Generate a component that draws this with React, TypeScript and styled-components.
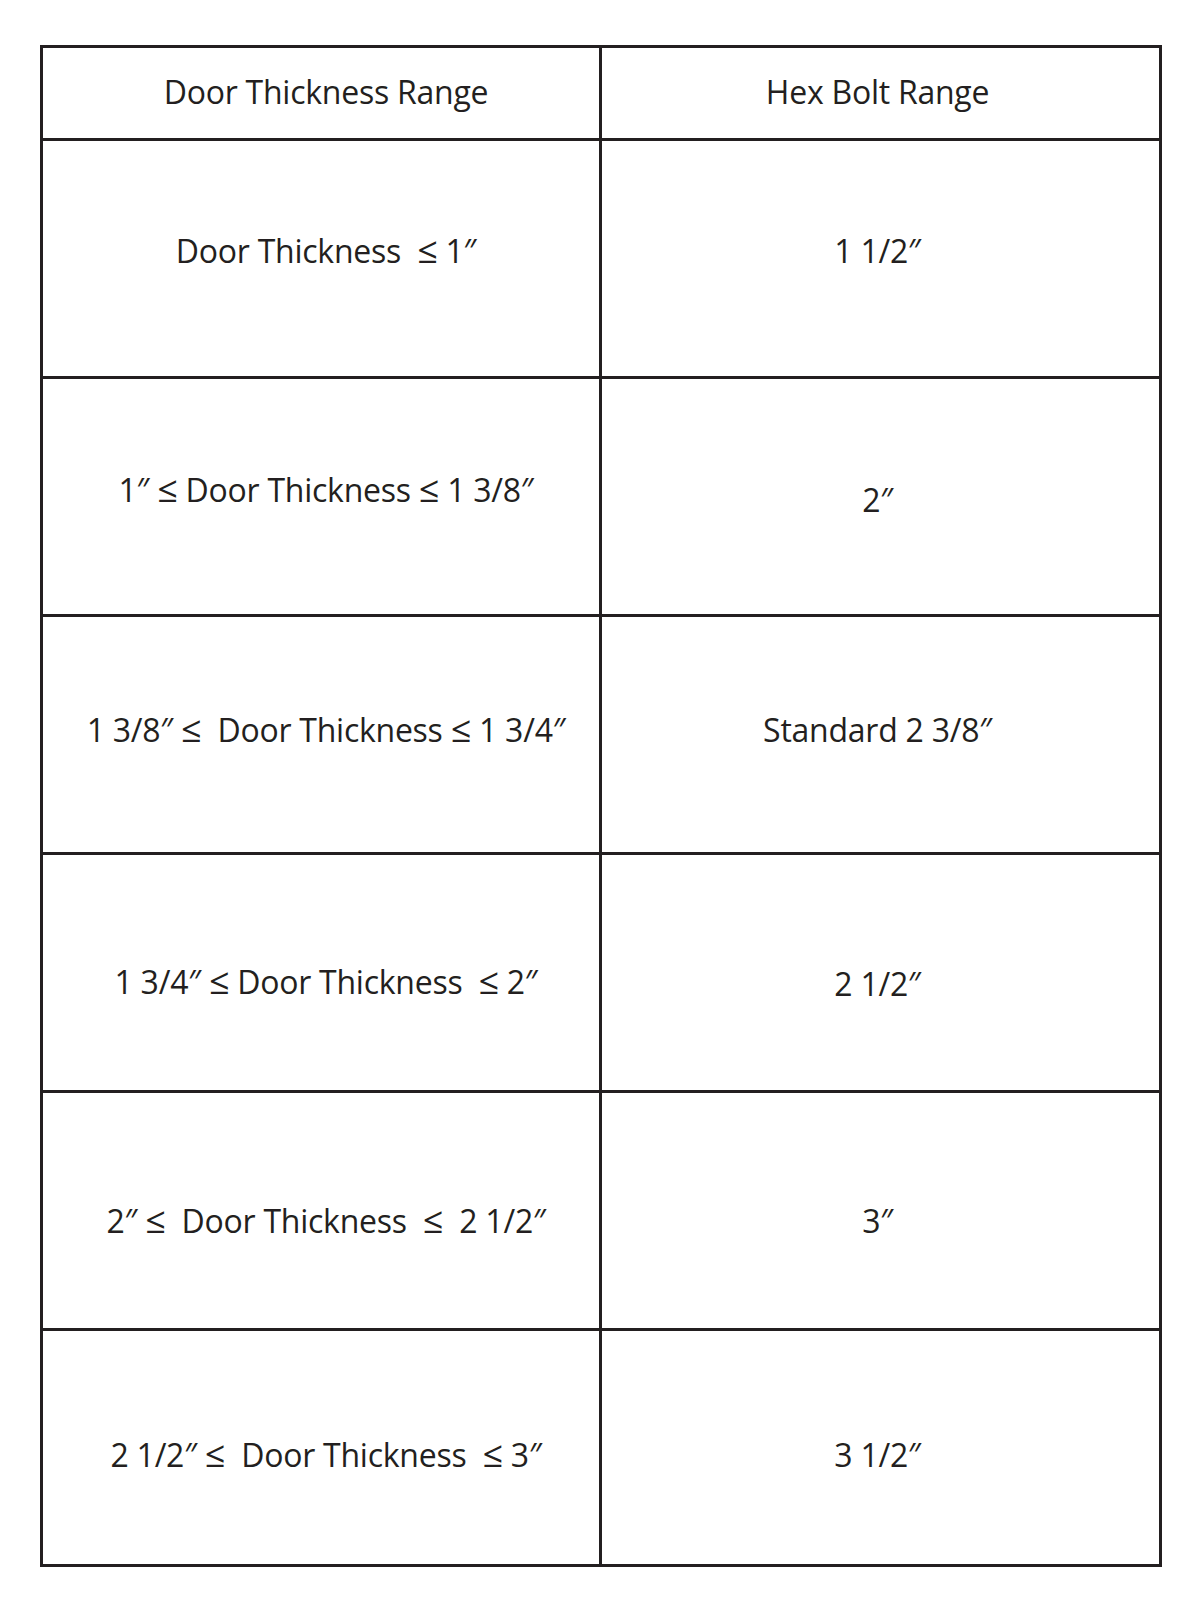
import React from "react";
import styled, { createGlobalStyle } from "styled-components";

const Global = createGlobalStyle`
  html, body { margin: 0; padding: 0; background: #ffffff; }
  body { width: 1200px; height: 1613px; overflow: hidden; }
`;

const Page = styled.div`
  padding: 45px 0 0 40px;
`;

const Grid = styled.div`
  box-sizing: border-box;
  width: 1122px;
  border: 3px solid #231f20;
  display: grid;
  grid-template-columns: 559px 1fr;
  grid-template-rows: 93px repeat(5, 238px) 233px;
`;

const Cell = styled.div<{ $right?: boolean; $last?: boolean }>`
  box-sizing: border-box;
  display: flex;
  align-items: center;
  justify-content: center;
  padding-left: ${(p) => (p.$right ? "0" : "10px")};
  padding-right: ${(p) => (p.$right ? "6px" : "0")};
  border-right: ${(p) => (p.$right ? "none" : "3px solid #231f20")};
  border-bottom: ${(p) => (p.$last ? "none" : "3px solid #231f20")};
  font-family: "Open Sans", "Noto Sans", sans-serif;
  font-size: 32px;
  letter-spacing: -0.25px;
  color: #231f20;
  white-space: pre;
`;

const Text = styled.span<{ $shift: number }>`
  position: relative;
  top: ${(p) => p.$shift}px;
`;

const Sym = styled.span`
  font-size: 1.12em;
  line-height: 1;
`;

const rows: [string, string, number, number][] = [
  ["Door Thickness Range", "Hex Bolt Range", -2, -2],
  ["Door Thickness  \u2264 1\u2033", "1 1/2\u2033", -8, -8],
  ["1\u2033 \u2264 Door Thickness \u2264 1 3/8\u2033", "2\u2033", -7, 3],
  ["1 3/8\u2033 \u2264  Door Thickness \u2264 1 3/4\u2033", "Standard 2 3/8\u2033", -5, -5],
  ["1 3/4\u2033 \u2264 Door Thickness  \u2264 2\u2033", "2 1/2\u2033", 9, 11],
  ["2\u2033 \u2264  Door Thickness  \u2264  2 1/2\u2033", "3\u2033", 10, 10],
  ["2 1/2\u2033 \u2264  Door Thickness  \u2264 3\u2033", "3 1/2\u2033", 7, 7],
];

function renderText(s: string) {
  return s.split("\u2264").map((part, i) => (
    <React.Fragment key={i}>
      {i > 0 && <Sym>{"\u2264"}</Sym>}
      {part}
    </React.Fragment>
  ));
}

export default function App() {
  return (
    <>
      <Global />
      <Page>
        <Grid>
          {rows.map(([a, b, sa, sb], i) => {
            const last = i === rows.length - 1;
            return (
              <React.Fragment key={i}>
                <Cell $last={last}>
                  <Text $shift={sa}>{renderText(a)}</Text>
                </Cell>
                <Cell $right $last={last}>
                  <Text $shift={sb}>{b}</Text>
                </Cell>
              </React.Fragment>
            );
          })}
        </Grid>
      </Page>
    </>
  );
}
